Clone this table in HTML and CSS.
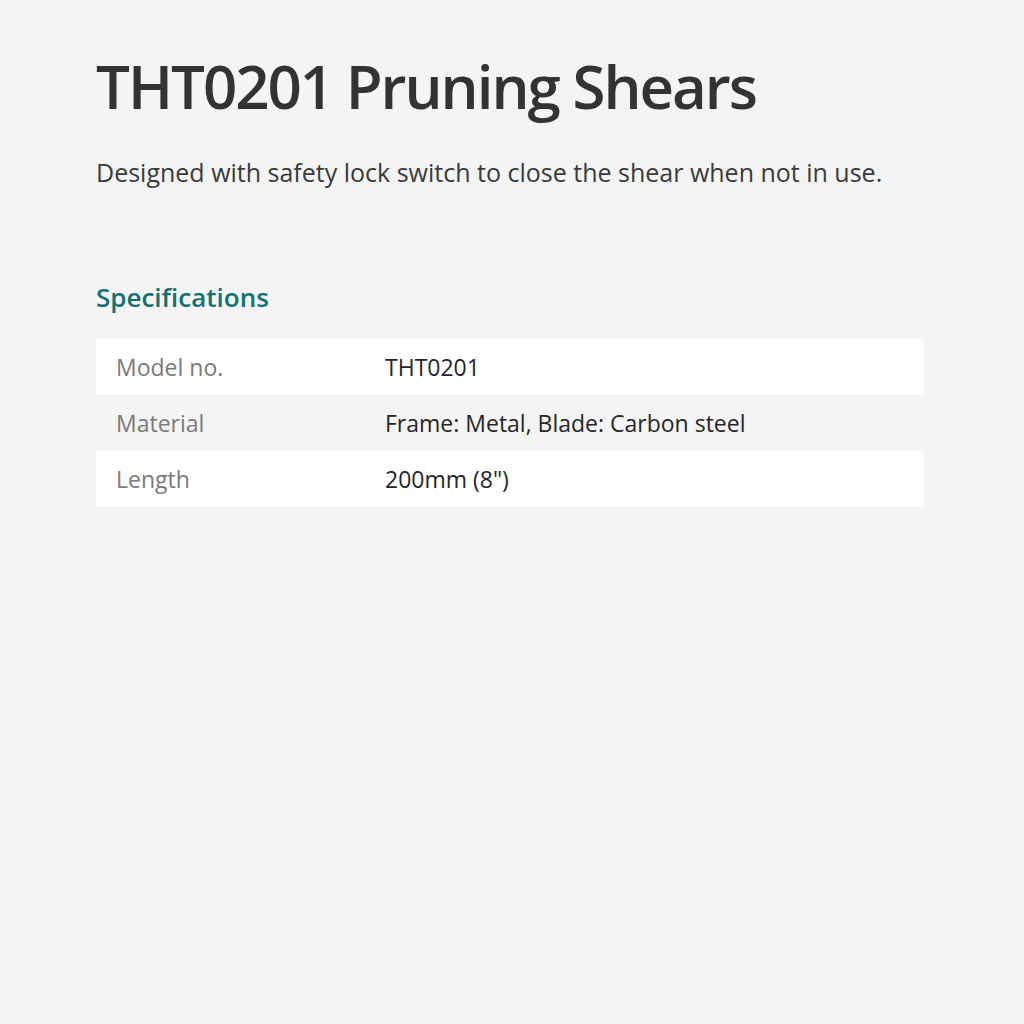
FILE: index.html
```html
<!DOCTYPE html>
<html lang="en">
<head>
<meta charset="utf-8">
<title>THT0201 Pruning Shears</title>
<link rel="stylesheet" href="styles.css">
</head>
<body>
<main class="product">
  <h1 class="product-title">THT0201 Pruning Shears</h1>
  <p class="product-desc">Designed with safety lock switch to close the shear when not in use.</p>
  <h2 class="spec-title">Specifications</h2>
  <div class="spec-table">
    <div class="spec-row">
      <div class="spec-label">Model no.</div>
      <div class="spec-value">THT0201</div>
    </div>
    <div class="spec-row alt">
      <div class="spec-label">Material</div>
      <div class="spec-value">Frame: Metal, Blade: Carbon steel</div>
    </div>
    <div class="spec-row">
      <div class="spec-label">Length</div>
      <div class="spec-value">200mm (8")</div>
    </div>
  </div>
</main>
</body>
</html>
```
FILE: styles.css
```css
html, body {
  margin: 0;
  padding: 0;
  background: #f4f4f4;
}
body {
  font-family: "Open Sans", "Liberation Sans", sans-serif;
  color: #333;
}
.product {
  padding: 46px 100px 0 96px;
}
.product-title {
  margin: 0;
  font-family: "Open Sans", sans-serif;
  font-weight: 600;
  font-size: 60px;
  line-height: 80px;
  letter-spacing: -2px;
  color: #333;
}
.product-desc {
  margin: 30px 0 0;
  font-size: 25px;
  line-height: 32px;
  color: #3a3a3a;
}
.spec-title {
  margin: 92px 0 0;
  font-size: 26px;
  line-height: 34px;
  font-weight: 600;
  color: #127272;
}
.spec-table {
  margin-top: 25px;
  display: flex;
  flex-direction: column;
}
.spec-row {
  display: grid;
  grid-template-columns: 289px 1fr;
  height: 56px;
  align-items: center;
  background: #fff;
  font-size: 23px;
}
.spec-row.alt {
  background: #f4f4f4;
}
.spec-label {
  padding-left: 20px;
  color: #7a7a7a;
}
.spec-value {
  color: #262626;
}
```
